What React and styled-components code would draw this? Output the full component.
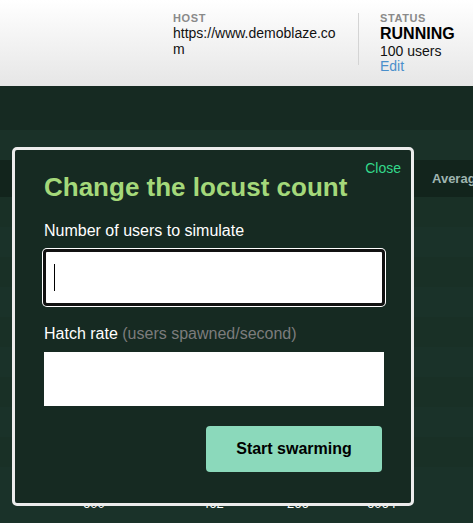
import React from 'react';
import styled, { createGlobalStyle } from 'styled-components';

const GlobalStyle = createGlobalStyle`
  html, body {
    margin: 0;
    padding: 0;
    background: #162a22;
    font-family: "Liberation Sans", Arial, sans-serif;
  }
`;

const Page = styled('div')`
  position: relative;
  width: 473px;
  height: 523px;
  overflow: hidden;
  background: #162a22;
`;

const Header = styled('div')`
  height: 86px;
  background: linear-gradient(#ffffff, #e6e6e6);
  display: flex;
  align-items: flex-start;
  padding: 12px 0 0 173px;
  box-sizing: border-box;
`;

const HostBox = styled('div')`
  width: 168px;
  word-break: break-all;
`;

const Divider = styled('div')`
  width: 1px;
  height: 52px;
  margin: 1px 21px 0 17px;
  background: #d4d4d4;
`;

const StatusBox = styled('div')`
  display: flex;
  flex-direction: column;
`;

const Label = styled('div')`
  font-size: 11px;
  font-weight: 700;
  color: #8a8a8a;
  letter-spacing: 0.6px;
  line-height: 13px;
`;

const Value = styled('div')`
  font-size: 14px;
  color: #111;
  line-height: 16px;
`;

const BigValue = styled('div')`
  font-size: 16px;
  font-weight: 700;
  color: #000;
  line-height: 18px;
`;

const EditLink = styled('a')`
  font-size: 14px;
  line-height: 15px;
  color: #4a8fcb;
  text-decoration: none;
`;

const Main = styled('div')`
  padding-top: 44px;
`;

const TabBand = styled('div')`
  height: 30px;
  background: #1a3128;
`;

const Table = styled('div')`
  display: flex;
  flex-direction: column;
`;

const HeadRow = styled('div')`
  height: 37px;
  background: #12241c;
  display: flex;
  align-items: center;
  padding-left: 432px;
  font-size: 13px;
  font-weight: 700;
  color: #9fb4b0;
  white-space: nowrap;
`;

const BodyRow = styled('div')`
  height: 30px;
  background: ${p => (p.$odd ? '#193026' : '#1a3229')};
`;

const NumRow = styled('div')`
  height: 28px;
  background: #1a3229;
  position: relative;
  font-size: 13px;
  color: #ffffff;
`;

const Num = styled('span')`
  position: absolute;
  top: -1px;
`;

const Modal = styled('div')`
  position: absolute;
  left: 12px;
  top: 147px;
  width: 402px;
  height: 359px;
  box-sizing: border-box;
  border: 3px solid #ececec;
  border-radius: 5px;
  background: #162a22;
  padding: 22px 29px 0 29px;
`;

const Close = styled('a')`
  position: absolute;
  right: 10px;
  top: 10px;
  font-size: 14px;
  color: #33d98b;
  text-decoration: none;
`;

const Title = styled('h2')`
  margin: 0 0 20px;
  font-size: 26px;
  font-weight: 700;
  color: #a4d87a;
  line-height: 30px;
`;

const FieldLabel = styled('div')`
  font-size: 16px;
  color: #ffffff;
  line-height: 18px;
  margin-bottom: 9px;
`;

const Hint = styled('span')`
  color: #7c7c7c;
`;

const FocusInput = styled('div')`
  height: 57px;
  margin-left: -1px;
  width: 342px;
  box-sizing: border-box;
  background: #fff;
  border: 3px solid #111;
  border-radius: 4px;
  box-shadow: 0 0 0 1px #ffffff;
  display: flex;
  align-items: center;
  padding-left: 8px;
  margin-bottom: 19px;
`;

const Caret = styled('div')`
  width: 1px;
  height: 27px;
  background: #000;
`;

const PlainInput = styled('div')`
  height: 54px;
  width: 340px;
  background: #fff;
  margin-bottom: 20px;
`;

const Actions = styled('div')`
  display: flex;
  justify-content: flex-end;
  width: 338px;
`;

const Button = styled('button')`
  width: 176px;
  height: 46px;
  border: none;
  border-radius: 4px;
  background: #8bd9bb;
  font-family: "Liberation Sans", Arial, sans-serif;
  font-size: 16px;
  font-weight: 700;
  color: #000;
`;

export default function App() {
  return (
    <Page>
      <GlobalStyle />
      <Header>
        <HostBox>
          <Label>HOST</Label>
          <Value>https://www.demoblaze.com</Value>
        </HostBox>
        <Divider />
        <StatusBox>
          <Label>STATUS</Label>
          <BigValue>RUNNING</BigValue>
          <Value>100 users</Value>
          <EditLink href="#">Edit</EditLink>
        </StatusBox>
      </Header>
      <Main>
        <TabBand />
        <Table>
          <HeadRow>Average</HeadRow>
          {Array.from({ length: 10 }).map((_, i) => (
            <BodyRow key={i} $odd={i % 2 === 0} />
          ))}
          <NumRow>
            <Num style={{ left: 83 }}>600</Num>
            <Num style={{ left: 202 }}>462</Num>
            <Num style={{ left: 287 }}>266</Num>
            <Num style={{ left: 367 }}>6064</Num>
          </NumRow>
        </Table>
      </Main>
      <Modal>
        <Close href="#">Close</Close>
        <Title>Change the locust count</Title>
        <FieldLabel>Number of users to simulate</FieldLabel>
        <FocusInput>
          <Caret />
        </FocusInput>
        <FieldLabel>
          Hatch rate <Hint>(users spawned/second)</Hint>
        </FieldLabel>
        <PlainInput />
        <Actions>
          <Button>Start swarming</Button>
        </Actions>
      </Modal>
    </Page>
  );
}
